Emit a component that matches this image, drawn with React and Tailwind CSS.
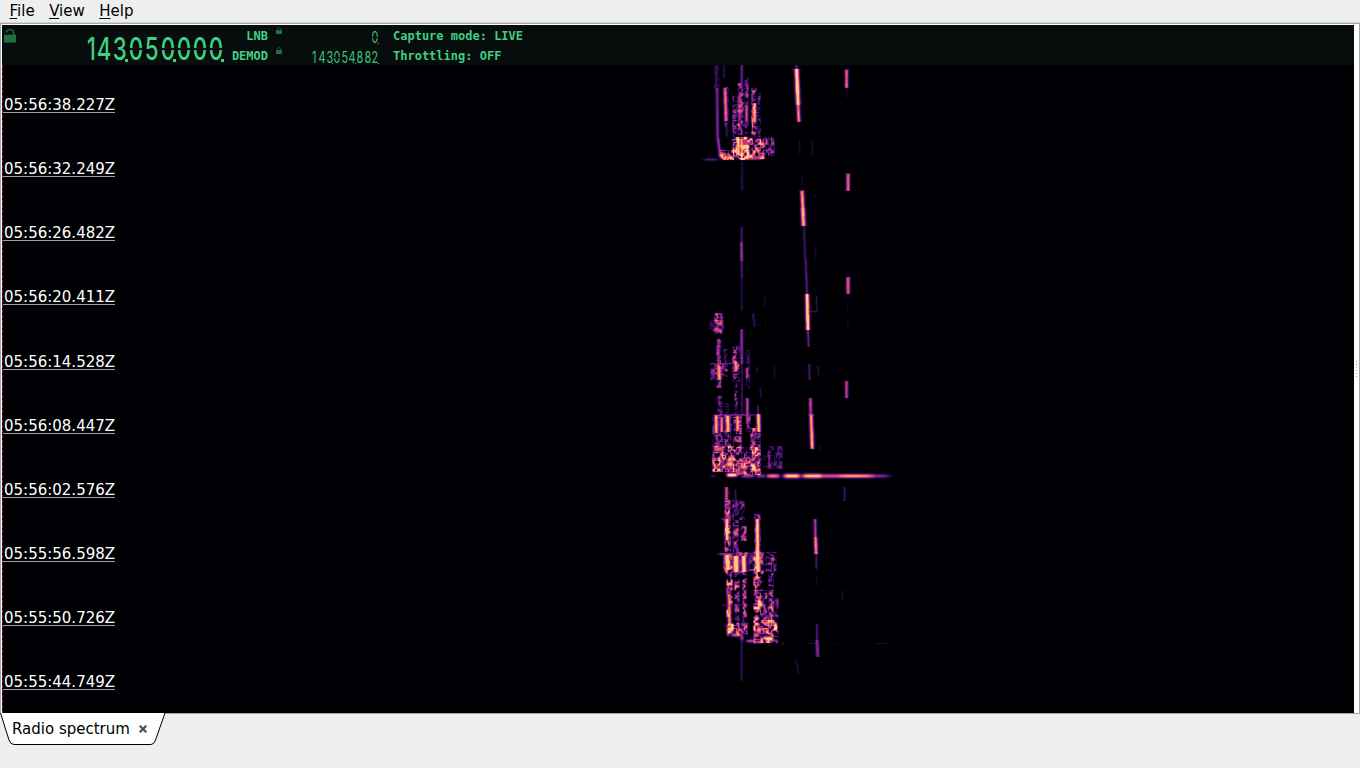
import React, { useMemo } from "react";

const W = 212;
const H = 647;
const OX = 690;
const OY = 65;

const STOPS = [
  [0, 0, 0, 4],
  [0.12, 24, 10, 50],
  [0.25, 65, 15, 112],
  [0.4, 125, 36, 130],
  [0.55, 183, 55, 121],
  [0.7, 235, 87, 96],
  [0.82, 252, 137, 97],
  [1, 254, 205, 142],
];

function colour(v) {
  let i = 1;
  while (i < STOPS.length - 1 && STOPS[i][0] < v) i++;
  const a = STOPS[i - 1];
  const b = STOPS[i];
  const t = Math.min(1, (v - a[0]) / (b[0] - a[0]));
  return `rgb(${[1, 2, 3].map((k) => Math.round(a[k] + (b[k] - a[k]) * t)).join(",")})`;
}

function hash(x, y) {
  let h = Math.imul(x, 374761393) + Math.imul(y, 668265263);
  h = Math.imul(h ^ (h >>> 13), 1274126177);
  return ((h ^ (h >>> 16)) >>> 0) / 4294967296;
}

const ease = (t) => t * t * (3 - 2 * t);

function noise(x, y) {
  const ix = Math.floor(x);
  const iy = Math.floor(y);
  const fx = ease(x - ix);
  const fy = ease(y - iy);
  const top = hash(ix, iy) * (1 - fx) + hash(ix + 1, iy) * fx;
  const bot = hash(ix, iy + 1) * (1 - fx) + hash(ix + 1, iy + 1) * fx;
  return top * (1 - fy) + bot * fy;
}

// Steady carriers: x at top, y at top, x at bottom, y at bottom, width, level
const LINES = [
  [796.3, 65, 796.5, 70, 1, 0.4],
  [796.5, 69, 798, 104, 1.7, 1.15], [798, 104, 798.8, 121, 1.4, 0.85],
  [846.5, 70, 846.5, 87, 1.3, 0.78], [846.7, 89, 846.7, 97, 0.7, 0.12],
  [799.5, 140, 799.5, 153, 0.7, 0.16], [812.5, 140, 812.5, 155, 0.7, 0.15],
  [801.5, 175, 801.5, 184, 0.7, 0.12], [848, 174, 848, 190, 1.4, 0.78],
  [802, 191, 802.8, 208, 1.5, 0.95], [802.8, 208, 803.5, 225, 1.7, 1],
  [804, 226, 805, 258, 1, 0.27], [805.5, 259, 807, 293, 1, 0.34],
  [814.5, 194, 814.5, 198, 0.7, 0.14], [815.5, 245, 815.5, 258, 0.7, 0.14],
  [807, 294, 807.8, 329, 1.5, 1.15], [807.8, 330, 808.5, 346, 0.9, 0.43],
  [816.5, 296, 816.5, 311, 0.7, 0.24], [848, 277, 848, 293, 1.5, 0.74],
  [847.5, 302, 847.5, 309, 0.7, 0.12], [847.5, 320, 847.5, 326, 0.7, 0.12],
  [809, 364, 809.5, 379, 0.9, 0.33], [817.5, 365, 818.5, 374, 0.7, 0.22],
  [846.5, 381, 846.5, 397, 1.3, 0.62], [810.3, 398, 810.6, 415, 1.3, 0.62],
  [811, 415, 812.2, 448, 1.5, 0.94], [820.3, 444, 820.3, 449, 0.7, 0.15],
  [844.5, 487, 844.5, 500, 0.9, 0.28], [815, 519, 815.3, 537, 1.2, 0.58],
  [815.5, 537, 816, 553, 1.4, 0.86], [816.3, 555, 816.3, 568, 1, 0.28],
  [816.5, 577, 816.5, 585, 0.7, 0.13], [822.7, 540, 822.7, 545, 0.7, 0.13],
  [842.5, 590, 842.5, 600, 0.7, 0.16], [816.7, 624, 817, 640, 1, 0.33],
  [817, 640, 817.6, 656, 1.4, 0.48], [795.8, 659, 798.5, 673, 0.8, 0.18],
  [741.7, 65, 741.7, 92, 1, 0.4], [742, 162, 742, 190, 0.9, 0.2],
  [741.6, 227, 741.6, 242, 1, 0.28], [741.3, 242, 741.6, 260, 1.2, 0.53],
  [741.7, 260, 741.7, 277, 1, 0.32], [741.8, 277, 741.8, 310, 0.8, 0.22],
  [741.6, 329, 741.6, 363, 1.2, 0.49], [741.8, 364, 741.8, 415, 0.9, 0.25],
  [753, 313, 754.5, 326, 0.9, 0.24], [764.5, 296, 764.5, 307, 0.7, 0.12],
  [765.5, 317, 765.5, 326, 0.7, 0.1], [774.3, 366, 774.3, 378, 0.7, 0.17],
  [756.5, 367, 757, 372, 0.8, 0.22], [760, 388, 761, 397, 0.8, 0.2],
  [741.6, 637, 741.6, 680, 0.9, 0.24], [782.5, 642, 782.5, 644, 0.8, 0.22],
  [717, 88, 717.5, 138, 1.2, 0.46], [718, 138, 720, 156, 1.2, 0.52],
  [715.8, 67, 716.5, 88, 0.9, 0.28], [724, 66, 724, 77, 0.8, 0.24],
  [725, 88, 726, 120, 1.4, 0.82], [726, 121, 727, 136, 0.9, 0.26],
  [754.5, 103, 754.5, 121, 1.4, 1], [740, 92, 739.5, 119, 1.2, 0.6],
  [746.5, 105, 746.5, 121, 1.2, 0.7],
  [718.5, 340, 718.5, 366, 1.1, 0.55], [718.7, 366, 719.3, 379, 1.7, 0.95],
  [735.5, 361, 736, 370, 1.6, 0.9], [747, 368, 747, 377, 1, 0.7],
  [747.2, 398, 747.4, 423, 1.2, 0.62], [758, 405, 758, 415, 0.9, 0.3],
  [716, 415, 716.3, 432, 1.5, 0.98], [721.6, 417, 721.6, 431, 1.3, 0.85],
  [727.5, 416, 728, 431, 1.7, 1.05], [737.5, 416, 737.5, 430, 1.5, 0.9],
  [758.3, 414, 758.7, 431, 1.5, 1.05],
  [726.4, 487, 726.4, 499, 1.3, 0.7], [726.7, 519, 727, 539, 1.5, 1.1],
  [735.5, 489, 735.5, 515, 0.8, 0.25], [757.3, 519, 757.5, 551, 1.5, 1.15],
  [727, 555, 728, 569, 2.3, 1.15], [735.8, 556, 736, 571, 2.4, 1.2],
  [743.5, 556, 744, 571, 1.9, 1.15], [757.4, 551, 758, 571, 2, 1.2],
  [729, 594, 729.5, 626, 1.4, 0.85],
  [738.3, 140, 738.3, 154, 1.6, 1.05], [741.7, 139, 741.7, 155, 1.4, 0.95],
];

// Modulated patches: left, top, right, bottom, level, density
const PATCHES = [
  [713, 66, 720, 88, 0.32, 0.55], [723, 87, 729, 129, 0.42, 0.65],
  [737, 83, 744, 136, 0.68, 0.65], [732, 96, 737, 142, 0.54, 0.65],
  [744, 76, 749, 142, 0.54, 0.65], [751, 88, 757, 142, 0.72, 0.7],
  [757, 91, 761, 141, 0.5, 0.6], [732, 137, 750, 160, 1.05, 0.86],
  [749, 138, 765, 159, 0.9, 0.8], [763, 137, 775, 156, 0.6, 0.78],
  [720, 150, 735, 160, 1, 0.78],
  [714, 313, 723, 334, 0.65, 0.7], [709, 317, 725, 330, 0.28, 0.5],
  [716, 339, 722, 388, 0.64, 0.7], [710, 363, 728, 380, 0.56, 0.68],
  [723, 349, 728, 379, 0.4, 0.55], [732, 346, 740, 382, 0.68, 0.7],
  [734, 382, 738, 414, 0.6, 0.7], [717, 396, 723, 414, 0.4, 0.64],
  [725, 403, 729, 414, 0.36, 0.6], [745, 350, 750, 389, 0.45, 0.66],
  [712, 414, 723, 449, 0.58, 0.68], [724, 414, 732, 449, 0.58, 0.68],
  [733, 414, 742, 447, 0.68, 0.72], [746, 414, 751, 432, 0.6, 0.68],
  [750, 428, 761, 449, 0.6, 0.75],
  [712, 446, 736, 472, 1, 0.78], [735, 447, 751, 475, 0.78, 0.7],
  [750, 447, 761, 475, 0.9, 0.8], [761, 455, 768, 468, 0.28, 0.56],
  [767, 446, 783, 469, 0.42, 0.66],
  [724, 500, 731, 552, 0.75, 0.78], [732, 500, 739, 552, 0.6, 0.7],
  [739, 501, 745, 520, 0.58, 0.7], [740, 526, 747, 541, 0.68, 0.76],
  [754, 514, 761, 551, 0.6, 0.72], [747, 555, 754, 571, 0.48, 0.66],
  [723, 554, 733, 573, 0.8, 0.74], [733, 552, 748, 573, 0.58, 0.74],
  [753, 552, 764, 573, 0.85, 0.8], [765, 552, 777, 572, 0.6, 0.7],
  [726, 572, 733, 627, 0.74, 0.8], [734, 572, 740, 628, 0.64, 0.76],
  [742, 572, 747, 628, 0.65, 0.77], [753, 572, 763, 640, 0.84, 0.8],
  [762, 590, 768, 641, 0.58, 0.76], [768, 573, 774, 636, 0.76, 0.77],
  [774, 597, 779, 639, 0.4, 0.68], [727, 624, 735, 636, 1.1, 0.85],
  [733, 623, 748, 636, 0.8, 0.76], [753, 620, 778, 643, 0.9, 0.8],
  [723, 416, 725, 448, 0.3, 0.7],
];

// Soft spots and sweeps: centre x, centre y, radius x, radius y, level
const SPOTS = [
  [711, 159.5, 8, 1.3, 0.35], [751, 158.8, 12, 1.2, 0.6],
  [722, 155, 3, 2.5, 0.95], [729, 157, 6, 1.5, 0.85],
  [796.5, 69.5, 4, 0.8, 0.5], [846.5, 70, 3, 0.8, 0.45],
  [846.5, 87, 2.5, 0.8, 0.4], [848, 174, 3, 0.8, 0.45],
  [802, 191, 3, 0.9, 0.4], [803, 208, 3, 0.8, 0.4],
  [811, 311.5, 8, 0.9, 0.3], [807.5, 311.5, 3, 1, 0.6],
  [807.5, 328.5, 2.5, 0.9, 0.45], [807, 294.5, 3, 0.9, 0.35],
  [811, 414.5, 3.5, 1, 0.5], [816, 553.5, 3, 1, 0.45],
  [717, 330, 4, 2, 0.7], [733, 363.5, 8, 0.9, 0.4],
  [736, 415, 21, 0.9, 0.52], [724, 363.5, 14, 0.8, 0.3],
  [732, 475, 5.5, 2, 1.25], [719, 449, 5, 3, 0.75],
  [730, 464, 4, 4, 0.95], [744, 467, 4, 3, 0.9],
  [748, 476, 7, 2, 0.55], [761, 476, 5, 2, 0.45],
  [773, 476, 7, 2.1, 0.84], [792, 476, 9, 2.3, 1.12],
  [813, 476, 12, 2.3, 1.08], [829, 476, 15, 2.1, 0.72],
  [854, 476, 24, 2.1, 0.93], [876, 476, 14, 1.8, 0.48],
  [713, 476, 3, 1, 0.3], [726, 519, 5, 1, 0.55],
  [726, 554, 8, 1.2, 0.55], [747, 553.5, 15, 0.8, 0.45],
  [735.7, 533, 2.5, 4, 0.78], [743, 537, 2.5, 3, 0.6],
  [730, 630, 3.5, 4, 1], [737, 635, 6, 1.8, 0.75],
  [742, 638, 2, 3, 0.5], [751, 641, 5, 1.5, 0.65],
  [758, 642, 6, 1.5, 0.6], [769, 638.8, 4.5, 2.5, 1.2],
  [759, 630, 2.5, 4, 0.9], [768, 623, 2.5, 2.5, 0.85],
  [742, 605, 9, 0.8, 0.3], [725, 605, 4, 0.8, 0.3],
  [812, 643.5, 5, 0.6, 0.2], [837, 643.5, 3, 0.6, 0.15],
  [881, 643.5, 7, 0.6, 0.18], [706.5, 513, 0.8, 4, 0.12],
];

// Receiver window: blends every bin with its neighbours
function soften(src) {
  const out = new Float32Array(W * H);
  for (let y = 1; y < H - 1; y++) {
    for (let x = 1; x < W - 1; x++) {
      const i = y * W + x;
      const side = src[i - 1] + src[i + 1] + src[i - W] + src[i + W];
      out[i] = src[i] * 0.6 + side * 0.1;
    }
  }
  for (let x = 0; x < W; x++) out[x] = out[W + x];
  return out;
}

function buildSpectrum() {
  const raw = new Float32Array(W * H);
  const put = (x, y, v) => {
    if (x < 0 || y < 0 || x >= W || y >= H) return;
    const i = y * W + x;
    raw[i] = Math.max(raw[i], v);
  };
  for (const [l, t, r, b, level, density] of PATCHES) {
    for (let y = t; y < b; y++) {
      for (let x = l; x < r; x++) {
        const n = noise(x / 2.7 + 13, y / 2.7 + 7);
        const ridge = Math.max(-0.3, 1 - Math.abs(n - 0.5) * 3.8);
        const blob = noise(x / 3.1 + 90, y / 4.3 + 31);
        const edge = x === l || x === r - 1 ? 0.6 : 1;
        const v = Math.max(0, ridge * 0.7 + (blob - 1 + density) * 0.9);
        put(x - OX, y - OY, v * level * edge * 1.15);
      }
    }
  }
  for (const [x0, y0, x1, y1, w, level] of LINES) {
    for (let y = Math.floor(y0); y <= y1; y++) {
      const c = x0 + ((x1 - x0) * (y - y0)) / (y1 - y0);
      for (let x = Math.floor(c) - 4; x <= c + 4; x++) {
        const d = (x + 0.5 - c - 0.1) / (w * 1.12);
        const flicker = 0.9 + 0.2 * noise(x / 2, y / 2.5);
        put(x - OX, y - OY, level * Math.exp(-d * d * 0.7) * flicker);
      }
    }
  }
  for (const [cx, cy, rx, ry, level] of SPOTS) {
    for (let y = Math.floor(cy - ry * 2); y <= cy + ry * 2; y++) {
      for (let x = Math.floor(cx - rx * 1.5); x <= cx + rx * 1.5; x++) {
        const dx = (x + 0.5 - cx) / rx;
        const dy = (y + 0.5 - cy) / ry;
        put(x - OX, y - OY, level * Math.exp(-dx * dx * dx * dx - dy * dy));
      }
    }
  }
  const heat = soften(raw);
  const levels = Array.from({ length: 25 }, () => "");
  for (let y = 0; y < H; y++) {
    for (let x = 0; x < W; x++) {
      const q = Math.min(24, Math.floor(heat[y * W + x] * 24));
      if (q > 0) levels[q] += `M${x} ${y}h1v1h-1z`;
    }
  }
  return levels;
}

function Spectrum() {
  const levels = useMemo(buildSpectrum, []);
  return (
    <svg className="ml-[687px] block shrink-0" width={W} height={H} shapeRendering="crispEdges">
      {levels.map((d, i) => (d ? <path key={i} d={d} fill={colour(i / 24)} /> : null))}
    </svg>
  );
}

function Lock({ open, className }) {
  return (
    <svg viewBox="0 0 12 14" className={className} fill="none">
      <path
        d={open ? "M2.5 4V3.5Q3.5 1 6 1Q9.5 1 9.5 4.5V7" : "M3 7V4Q3 1 6 1Q9 1 9 4V7"}
        stroke="#19663b"
        strokeWidth="1.6"
      />
      <path d="M0 6.2H12V14H0Z" fill="#207044" />
    </svg>
  );
}

function BigDigits({ value }) {
  return (
    <div className="flex h-[30px] font-['Inter','Liberation_Sans',sans-serif] text-[31px] leading-[30px] font-medium text-[#40d080]">
      {value.split("").map((c, i) => (
        <span key={i} className={`relative flex w-4 ${c === "1" ? "justify-end" : "justify-center"}`}>
          <span className={`inline-block ${c === "1" ? "origin-right scale-x-[0.68]" : "origin-center scale-x-[0.72]"}`}>{c}</span>
          {c === "0" && <span className="absolute inset-x-0 top-[14px] h-[1.5px] bg-[#060d0c]" />}
          {i % 3 === 2 && <span className="absolute right-0 bottom-[2px] size-[3px] bg-[#40d080]" />}
        </span>
      ))}
    </div>
  );
}

function SmallDigits({ value }) {
  return (
    <div className="flex h-5 justify-end font-['Inter','Liberation_Sans',sans-serif] text-[15.5px] leading-[21px] font-normal text-[#3cc478]">
      {value.split("").map((c, i) => (
        <span key={i} className="relative flex w-[7.6px] justify-center">
          <span className="inline-block scale-x-[0.7]">{c}</span>
          {c === "0" && <span className="absolute inset-x-0 top-[10px] h-px bg-[#060d0c]" />}
          {(value.length - i) % 3 === 1 && (
            <span className="absolute right-0 bottom-[3px] size-px bg-[#3cc478]" />
          )}
        </span>
      ))}
    </div>
  );
}

const TIMES = [
  "05:56:38.227Z", "05:56:32.249Z", "05:56:26.482Z", "05:56:20.411Z", "05:56:14.528Z",
  "05:56:08.447Z", "05:56:02.576Z", "05:55:56.598Z", "05:55:50.726Z", "05:55:44.749Z",
];

function MenuItem({ first, rest }) {
  return (
    <span>
      <span className="underline decoration-1 underline-offset-2">{first}</span>
      {rest}
    </span>
  );
}

export default function App() {
  return (
    <div className="flex h-[768px] w-[1360px] flex-col overflow-hidden bg-[#efefef] font-['DejaVu_Sans',sans-serif] text-[15px] text-black">
      <nav className="flex h-[22px] shrink-0 gap-[14.5px] pl-[9.5px] leading-[22px]">
        <MenuItem first="F" rest="ile" />
        <MenuItem first="V" rest="iew" />
        <MenuItem first="H" rest="elp" />
      </nav>

      <div className="flex h-[692px] shrink-0 flex-col border-t border-[#d4d4d4]">
        <main className="flex h-[691px] border-y border-r border-l border-[#a6a6a6] bg-white pt-px pl-px">
          <div className="flex w-[1352px] flex-col bg-[#000004]">
            <header className="flex h-10 shrink-0 bg-[#060d0c] font-['DejaVu_Sans_Mono',monospace] text-[12px] font-bold leading-5 text-[#40d080]">
              <div className="w-[78px] pt-[3px] pl-[2px]">
                <Lock open className="h-[15px] w-3" />
              </div>
              <div className="w-[146px] pt-[9px]">
                <BigDigits value="143050000" />
              </div>
              <div className="w-[42px] pt-px text-right">
                <div>LNB</div>
                <div>DEMOD</div>
              </div>
              <div className="flex w-[18px] flex-col gap-[13px] pt-[2px] pl-2">
                <Lock className="h-[7px] w-[6px]" />
                <Lock className="h-[7px] w-[6px]" />
              </div>
              <div className="w-[93px] pt-[2px]">
                <SmallDigits value="0" />
                <SmallDigits value="143054882" />
              </div>
              <div className="pt-px pl-[14px]">
                <div>Capture mode: LIVE</div>
                <div>Throttling: OFF</div>
              </div>
            </header>
            <div className="relative flex h-[648px] overflow-hidden border-l border-dashed border-[#79242b]">
              <Spectrum />
              <div className="absolute top-[29px] left-0 flex flex-col gap-[45.15px]">
                {TIMES.map((t) => (
                  <div key={t} className="h-[19px] w-[112px] border-b border-[#a0a0a4] pl-px leading-[23px] text-white">
                    {t}
                  </div>
                ))}
              </div>
            </div>
          </div>
          <div className="flex flex-1 flex-col items-center justify-center gap-[2px]">
            {[0, 1, 2, 3, 4, 5].map((i) => (
              <span key={i} className="size-px bg-[#a0a0a0]" />
            ))}
          </div>
        </main>
      </div>

      <footer className="-mt-px flex">
        <div className="relative h-8 w-[166px]">
          <svg className="absolute inset-0 h-8 w-[166px]" viewBox="0 0 166 32">
            <path d="M0.5 0L9 27Q10.5 31.5 14 31.5H151Q154 31.5 155.5 27L165 0" fill="white" stroke="black" />
          </svg>
          <div className="relative flex items-center pl-3 leading-8">
            <span>Radio spectrum</span>
            <svg className="ml-[9px] size-2" viewBox="0 0 8 8" fill="none">
              <path d="M0.7 0.7L7.3 7.3M7.3 0.7L0.7 7.3" stroke="#505050" strokeWidth="2.2" />
            </svg>
          </div>
        </div>
      </footer>
    </div>
  );
}
